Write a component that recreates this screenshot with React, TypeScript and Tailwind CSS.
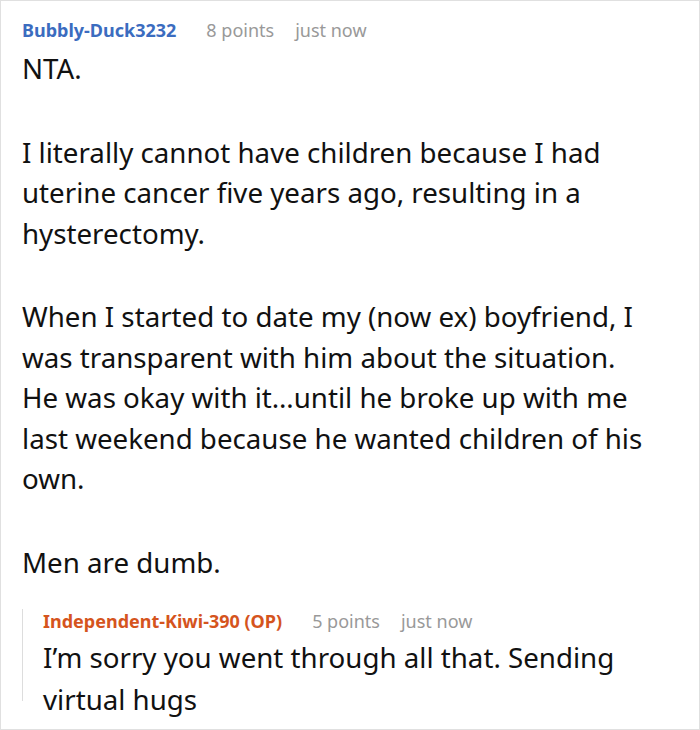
const paragraphs: string[][] = [
  ["NTA."],
  [
    "I literally cannot have children because I had",
    "uterine cancer five years ago, resulting in a",
    "hysterectomy.",
  ],
  [
    "When I started to date my (now ex) boyfriend, I",
    "was transparent with him about the situation.",
    "He was okay with it\u2026until he broke up with me",
    "last weekend because he wanted children of his",
    "own.",
  ],
  ["Men are dumb."],
];

function Meta({ name, color, points }: { name: string; color: string; points: number }) {
  return (
    <div className="flex items-baseline gap-[30px] text-[18px] leading-[24px]">
      <span className={`font-bold ${color}`}>{name}</span>
      <span className="flex gap-[21px] text-[#999999]">
        <span>{points} points</span>
        <span>just now</span>
      </span>
    </div>
  );
}

function Lines({ lines }: { lines: string[] }) {
  return (
    <p className="whitespace-nowrap">
      {lines.map((l, i) => (
        <span key={i}>
          {i > 0 && <br />}
          {l}
        </span>
      ))}
    </p>
  );
}

export default function App() {
  return (
    <div className="h-[730px] w-[700px] overflow-hidden border border-[#e0e0e0] bg-white font-['Noto_Sans',sans-serif] text-[#111111]">
      <div className="px-[21px] pt-[17px]">
        <Meta name="Bubbly-Duck3232" color="text-[#3b6cbf]" points={8} />
        <div className="mt-[6px] flex flex-col gap-[43px] text-[27.7px] leading-[40.5px]">
          {paragraphs.map((p, i) => (
            <Lines key={i} lines={p} />
          ))}
        </div>
        <div className="mt-[37px] h-[92px] border-l border-[#dddddd] pl-[20px]">
          <div className="-mt-[10px]">
            <Meta name="Independent-Kiwi-390 (OP)" color="text-[#d5541d]" points={5} />
          </div>
          <div className="mt-[3px] text-[27.7px] leading-[42px]">
            <Lines lines={["I’m sorry you went through all that. Sending", "virtual hugs"]} />
          </div>
        </div>
      </div>
    </div>
  );
}
